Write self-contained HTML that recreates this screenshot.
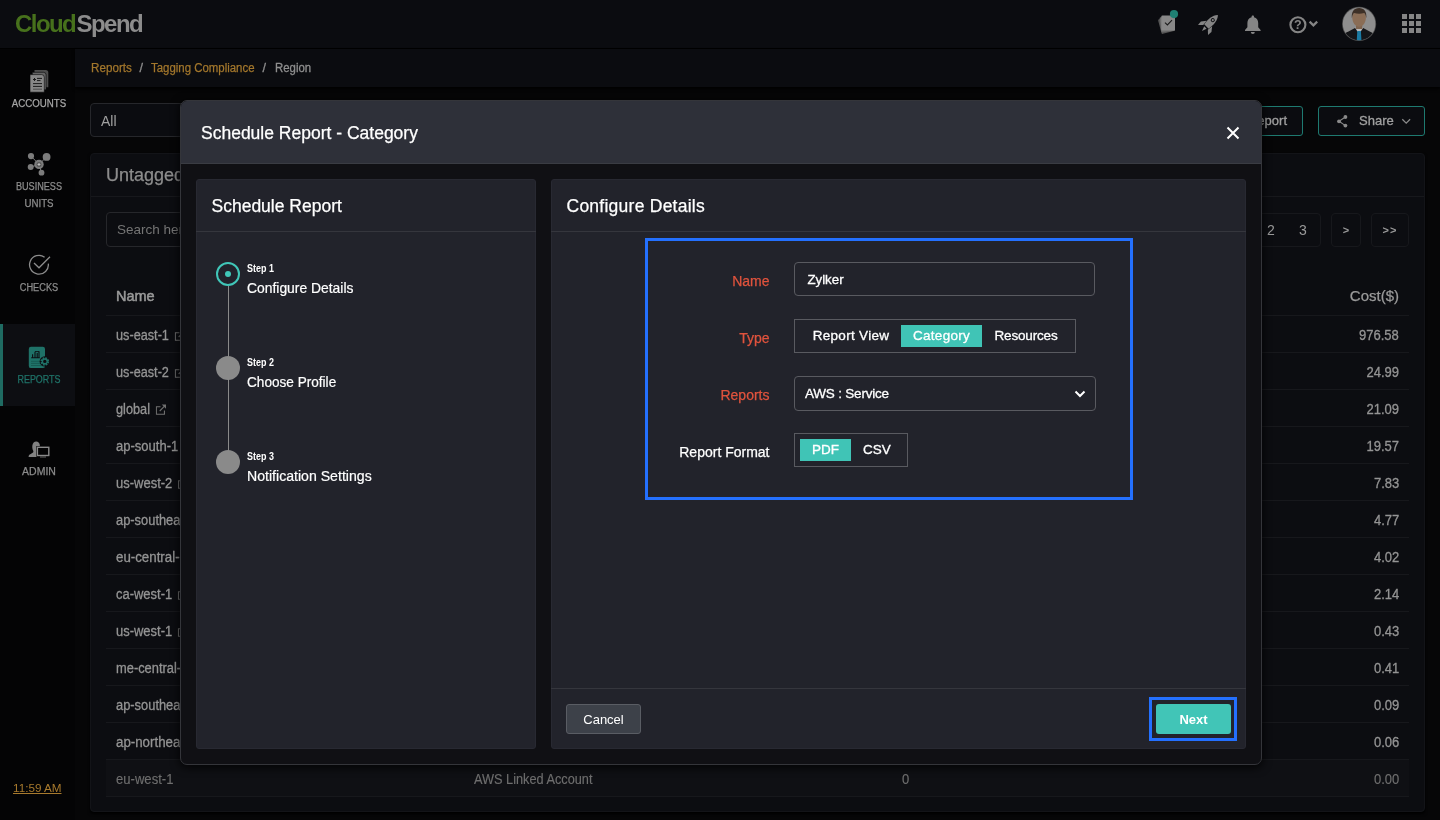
<!DOCTYPE html>
<html lang="en">
<head>
<meta charset="utf-8">
<title>CloudSpend - Schedule Report</title>
<style>
*{box-sizing:border-box;margin:0;padding:0}
html,body{width:1440px;height:820px;overflow:hidden;background:#060607;font-family:"Liberation Sans",sans-serif;color:#ccc}
#wrap{position:absolute;left:0;top:0;width:1440px;height:820px;will-change:transform}
.abs{position:absolute}
#top{position:absolute;left:0;top:0;width:1440px;height:49px;background:#0b0c10;border-bottom:1px solid #000}
#logo{position:absolute;left:15px;top:9px;font-size:24px;font-weight:bold;letter-spacing:-1.55px;line-height:30px}
#logo .g{color:#47711c}
#logo .s{color:#8c8c8c;margin-left:1.300px}
#side{position:absolute;left:0;top:49px;width:75px;height:771px;background:#040405}
.nav{position:absolute;left:3px;width:72px;text-align:center;font-size:10px;color:#8c8c8c;line-height:17px;white-space:nowrap;transform-origin:50% 50%;-webkit-text-stroke:.25px currentColor}
#crumb{position:absolute;left:75px;top:49px;width:1365px;height:38px;background:#0b0c10;box-shadow:0 2px 3px #000}
#crumb span{position:absolute;top:0;font-size:12.5px;line-height:39.500px;transform-origin:0 50%;color:#8f8f8f;white-space:nowrap;-webkit-text-stroke:.3px #8f8f8f}
#crumb span.a{color:#a3772c;-webkit-text-stroke:.25px #a3772c}
#sel{position:absolute;left:90px;top:103px;width:200px;height:34px;border:1px solid #26272b;border-radius:4px;background:#0b0c10;font-size:14px;line-height:34px;padding-left:10px;color:#a0a0a0}
.tbtn{position:absolute;top:106px;height:30px;border:1px solid #1e7a70;border-radius:3px;background:#0b0c10;font-size:13px;line-height:28px;color:#a0a0a0;-webkit-text-stroke:.3px #a0a0a0}
#card{position:absolute;left:90px;top:153px;width:1335px;height:659px;background:#0c0d11;border:1px solid #131418;border-radius:4px;box-shadow:0 2px 3px #000}
#cardt{position:absolute;left:106px;top:163px;font-size:18px;color:#8c8c8c;-webkit-text-stroke:.25px #8c8c8c;line-height:24px;white-space:nowrap}
.hline{position:absolute;height:1px}
#srch{position:absolute;left:106px;top:212px;width:200px;height:35px;border:1px solid #26272b;border-radius:4px;font-size:13.5px;line-height:34px;padding-left:10px;color:#747474}
.pg{position:absolute;top:213px;height:34px;border:1px solid #17181c;border-radius:4px}
.pgt{position:absolute;top:213px;height:34px;font-size:14px;line-height:34px;color:#9a9a9a;text-align:center}
.th{position:absolute;top:286px;font-size:14.5px;color:#9a9a9a;line-height:20px}
.row{position:absolute;left:106px;width:1303px;height:37px;border-top:1px solid #17181c;font-size:14px;line-height:38.400px;color:#949494}
.row span.n{position:absolute;left:10px;white-space:nowrap;transform-origin:0 50%;transform:scaleX(.92);-webkit-text-stroke:.3px currentColor}
.row span.c{position:absolute;right:10px;transform-origin:100% 50%;transform:scaleX(.93);-webkit-text-stroke:.3px currentColor}
.row .ext{margin-left:6.500px;vertical-align:-1px;transform:scaleX(1.080)}
.row.last{background:#0f1014;color:#6e6e6e;border-bottom:1px solid #17181c;height:38px}
.row.last span{-webkit-text-stroke:.15px currentColor!important}
#modal{position:absolute;left:180px;top:100px;width:1082px;height:665px;background:#101014;border:1px solid #34353a;border-radius:7px;box-shadow:0 2px 8px 1px rgba(0,0,0,.75)}
#mh{position:absolute;left:181px;top:101px;width:1080px;height:63px;background:#2e3039;border-bottom:1px solid #3a3c43;border-radius:6px 6px 0 0}
.t18{position:absolute;font-size:17.5px;color:#fff;-webkit-text-stroke:.25px #fff;line-height:24px;white-space:nowrap}
.panel{position:absolute;top:179px;height:570px;background:#22232b;border:1px solid #282932;border-radius:3px}
.st{position:absolute;left:247px;color:#fff;white-space:nowrap}
.st b{display:block;font-size:10px;line-height:12px;transform-origin:0 50%;transform:scaleX(.895)}
.st span{display:block;font-size:14.500px;line-height:20px;margin-top:3.300px;-webkit-text-stroke:.2px #fff;transform-origin:0 50%}
.dot{position:absolute;left:216px;width:24px;height:24px;border-radius:50%;background:#8a8a8a}
.lbl{position:absolute;font-size:14px;color:#e0533d;-webkit-text-stroke:.25px currentColor;line-height:18px;white-space:nowrap;text-align:right;width:200px;left:569.500px}
.fld{position:absolute;left:794px;border:1px solid #595a60;font-size:13.5px;color:#fff;-webkit-text-stroke:.3px #fff;white-space:nowrap}
.tg{position:absolute;top:5px;height:22px;line-height:21px;text-align:center;white-space:nowrap}
.tg.on{background:#40c4b6}
.btn{position:absolute;top:704px;height:30px;border-radius:3px;font-size:13px;line-height:28px;text-align:center;color:#fff}
</style>
</head>
<body>
<div id="wrap">
<div id="top">
  <div id="logo"><span class="g">Cloud</span><span class="s">Spend</span></div>
<svg class="abs" style="left:1140px;top:0" width="300" height="48" viewBox="1140 0 300 48">
    <!-- checklist stack -->
    <g>
      <rect x="1161.300" y="15.600" width="13.700" height="15" rx="1.200" fill="#555" transform="rotate(-15 1175 30.600)"/>
      <rect x="1161.300" y="15.600" width="13.700" height="15" rx="1.200" fill="#6c6c6c" transform="rotate(-7.500 1175 30.600)"/>
      <rect x="1161.300" y="15.600" width="13.700" height="15" rx="1.200" fill="#888"/>
      <path d="M1165 22.600l2.400 2.300 4.600-4.700" fill="none" stroke="#1c1c1c" stroke-width="1.100"/>
      <circle cx="1174" cy="14.100" r="4.100" fill="#1f8073"/>
    </g>
    <!-- rocket -->
    <g fill="#858585" transform="translate(1209.800 23.100) rotate(45) scale(1.200)">
      <path d="M0 -9.500C3.200 -6.500 3.400 -1 2.600 4L-2.600 4C-3.400 -1 -3.200 -6.500 0 -9.500Z"/>
      <path d="M-3.300 .500L-6.200 4.300L-5.900 8L-2.700 5Z"/>
      <path d="M3.300 .500L6.200 4.300L5.900 8L2.700 5Z"/>
      <path d="M-1.400 5.200L1.400 5.200L0 9.200Z"/>
      <circle cx="0" cy="-3.500" r="1.700" fill="#0b0c10"/>
      <circle cx="0" cy="-3.500" r=".9"/>
    </g>
    <!-- bell -->
    <g fill="#858585">
      <path d="M1252.800 15.400c.8 0 1.200.5 1.200 1.200v.6c2.700.7 4.200 2.900 4.200 5.700v4.300l2.400 2.700v1.100h-15.600v-1.100l2.400-2.700v-4.300c0-2.800 1.500-5 4.200-5.700v-.6c0-.7.400-1.200 1.200-1.200z"/>
      <path d="M1250.800 32h4a2 2 0 0 1-4 0z"/>
    </g>
    <!-- help -->
    <g>
      <circle cx="1297.900" cy="24.700" r="7.500" fill="none" stroke="#858585" stroke-width="2.100"/>
      <text x="1297.900" y="29.200" text-anchor="middle" font-family="Liberation Sans, sans-serif" font-size="12.500" font-weight="bold" fill="#858585">?</text>
      <path d="M1309.600 21.600l3.800 3.800 3.800-3.800" fill="none" stroke="#858585" stroke-width="2.200"/>
    </g>
    <!-- avatar -->
    <g>
      <clipPath id="avc"><circle cx="1359.100" cy="23.900" r="16.300"/></clipPath>
      <circle cx="1359.100" cy="23.900" r="17.100" fill="#4a4a4a"/>
      <circle cx="1359.100" cy="23.900" r="16.300" fill="#8e8e8e"/>
      <g clip-path="url(#avc)">
        <path d="M1341 42c0-6 2.500-8.500 7.500-10.500l6.500-3.600h8.200l6.500 3.600c5 2 7.500 4.500 7.500 10.500z" fill="#141518"/>
        <path d="M1355 27.700l4.100 6.300 4.100-6.300z" fill="#b9b9b9"/>
        <path d="M1357.300 31h3.600l.6 10h-4.800z" fill="#1a7aa3"/>
        <rect x="1356" y="24" width="6.200" height="5" fill="#7e6450"/>
        <path d="M1352.300 17.500c0-4 2.700-6.500 6.800-6.500s6.800 2.500 6.800 6.500c0 5-2.800 9.200-6.800 9.200s-6.800-4.200-6.800-9.200z" fill="#8a6d56"/>
        <path d="M1351.900 18.300c-.8-6.300 2-10.300 7.200-10.300s8 4 7.200 10.300c-.4-2.800-1-4.400-2.200-5.400-3.200 1-6.800 1-10 0-1.200 1-1.800 2.600-2.200 5.400z" fill="#3d3027"/>
      </g>
    </g>
    <!-- grid -->
    <g fill="#858585">
      <rect x="1402" y="14" width="5" height="5"/><rect x="1409" y="14" width="5" height="5"/><rect x="1416" y="14" width="5" height="5"/>
      <rect x="1402" y="21" width="5" height="5"/><rect x="1409" y="21" width="5" height="5"/><rect x="1416" y="21" width="5" height="5"/>
      <rect x="1402" y="28" width="5" height="5"/><rect x="1409" y="28" width="5" height="5"/><rect x="1416" y="28" width="5" height="5"/>
    </g>
  </svg>
</div>
<div id="side">
  <div class="abs" style="left:0;top:275px;width:75px;height:82px;background:#0d0e12;border-left:3px solid #1f6b62"></div>
<svg class="abs" style="left:0;top:0" width="75" height="771" viewBox="0 49 75 771">
    <!-- accounts -->
    <g>
      <path d="M34.5 70h11.2a2.6 2.6 0 0 1 2.6 2.6v14.6h-13.8z" fill="#4e4e4e"/>
      <path d="M32.3 72.3h11.2a2.6 2.6 0 0 1 2.6 2.6v14.8h-13.8z" fill="#666" stroke="#040405" stroke-width=".6"/>
      <path d="M30 74.6h11.6a2.7 2.7 0 0 1 2.7 2.7v14.9h-14.3z" fill="#878787" stroke="#040405" stroke-width=".6"/>
      <g stroke="#1a1a1a" stroke-width="1" fill="none">
        <path d="M33 79.5h3M34.5 78v3M37 78.4h5M37 80.6h3.5M33 83.6h9M33 86.4h9"/>
      </g>
      <path d="M33 89.2h9" stroke="#555" stroke-width="1.2"/>
    </g>
    <!-- business units -->
    <g fill="#7c7c7c" stroke="#7c7c7c">
      <path d="M31 156.1L39 164.4M46.6 156.9L39 164.4M30.7 167.1L39 164.4M41.5 172.7L39 164.4" stroke-width="1" fill="none"/>
      <circle cx="31" cy="156.1" r="3.1" stroke="none"/>
      <circle cx="46.6" cy="156.9" r="3.9" stroke="none"/>
      <circle cx="30.7" cy="167.1" r="3" stroke="none"/>
      <circle cx="41.5" cy="172.7" r="2.9" stroke="none"/>
      <circle cx="39" cy="164.4" r="4.7" stroke="none"/>
      <circle cx="39" cy="164.4" r="2.5" fill="#565656" stroke="none"/>
      <path d="M39 162.900v3M37.500 164.400h3" stroke="#c8c8c8" stroke-width=".9" fill="none"/>
    </g>
    <!-- checks -->
    <g fill="none" stroke="#8c8c8c" stroke-width="1.3">
      <path d="M44.6 257.2A9.4 9.4 0 1 0 48.3 263.6"/>
      <path d="M34 263L39 267.8L50 256.8"/>
    </g>
    <!-- reports -->
    <g>
      <rect x="28.8" y="346.7" width="16.2" height="21.4" rx="2.2" fill="#1f7268"/>
      <path d="M31.2 357.8h8.6M32.6 357.4v-3.2M35 357.4v-5.6M37.2 357.4v-4.4M39 357.4v-6.2" stroke="#0d0e12" stroke-width="1.1" fill="none"/>
      <path d="M35 351.6h4" stroke="#0d0e12" stroke-width=".9"/>
      <path d="M31 361.3h9M31 363.4h9M31 365.5h11" stroke="#175a52" stroke-width="1" fill="none"/>
      <circle cx="44.8" cy="361.4" r="5.2" fill="#0d0e12"/>
      <circle cx="44.8" cy="361.4" r="3.3" fill="none" stroke="#1f7268" stroke-width="2" stroke-dasharray="1.6 1"/>
      <circle cx="44.8" cy="361.4" r="2.4" fill="none" stroke="#1f7268" stroke-width="1.4"/>
    </g>
    <!-- admin -->
    <g>
      <path d="M28.6 457c0-1.8.6-2.5 2.2-3.1 1.6-.6 2.6-1.2 2.6-2.3 0-.9-.7-1.400-.9-2.800-.2-.9-.3-2.300-.1-3.500.4-2.400 1.800-3.900 3.800-3.900s3.300 1.400 3.600 3.400l.1 2.200h-3v10z" fill="#828282"/>
      <rect x="36.200" y="446.100" width="13.800" height="10.600" fill="#040405"/><rect x="37.400" y="447.300" width="11.400" height="8.200" fill="#040405" stroke="#8a8a8a" stroke-width="1.400"/>
      <path d="M40 457h6" stroke="#666" stroke-width="1"/>
    </g>
  </svg>
  <div class="nav" style="top:45.800px;color:#a6a6a6;transform:scaleX(.97)">ACCOUNTS</div>
  <div class="nav" style="top:129px;transform:scaleX(.911)">BUSINESS</div>
  <div class="nav" style="top:146px;transform:scaleX(.97)">UNITS</div>
  <div class="nav" style="top:230px;transform:scaleX(.923)">CHECKS</div>
  <div class="nav" style="top:322px;transform:scaleX(.894);color:#1f7268">REPORTS</div>
  <div class="nav" style="top:413.800px;transform:scaleX(1.050)">ADMIN</div>
  <div class="abs" style="left:13px;top:732px;font-size:11.700px;color:#a87a2d;text-decoration:underline;line-height:14px;white-space:nowrap">11:59 AM</div>
</div>
<div id="crumb">
  <span class="a" style="left:15.500px;transform:scaleX(.934)">Reports</span><span style="left:64.500px">/</span>
  <span class="a" style="left:76.300px;transform:scaleX(.914)">Tagging Compliance</span><span style="left:187.500px">/</span>
  <span style="left:199.600px;transform:scaleX(.912)">Region</span>
</div>
<div id="sel">All</div>
<div class="tbtn" style="left:1170px;width:133px;text-align:right;padding-right:15px">Schedule Report</div>
<div class="tbtn" style="left:1318px;width:107px;padding-left:40px">Share</div>
<svg class="abs" style="left:1334px;top:112px" width="80" height="18" viewBox="1334 112 80 18">
  <g fill="#8a8a8a"><circle cx="1345.400" cy="117" r="1.900"/><circle cx="1339" cy="121.300" r="1.900"/><circle cx="1345.400" cy="125.600" r="1.900"/></g>
  <path d="M1345.400 117L1339 121.300L1345.400 125.600" fill="none" stroke="#8a8a8a" stroke-width="1.100"/>
  <path d="M1402.300 119.200l3.900 3.900 3.900-3.900" fill="none" stroke="#8a8a8a" stroke-width="1.300"/>
</svg>
<div id="card"></div>
<div id="cardt">Untagged Resources</div>
<div class="hline" style="left:91px;top:196px;width:1333px;background:#17181c"></div>
<div id="srch">Search here</div>
<div class="pg" style="left:1200px;width:121px"></div>
<div class="pgt" style="left:1256px;width:30px">2</div>
<div class="pgt" style="left:1288px;width:30px">3</div>
<div class="pg" style="left:1331px;width:30px"></div>
<div class="pgt" style="left:1331px;width:30px;font-size:11px;font-weight:bold">&gt;</div>
<div class="pg" style="left:1371px;width:38px"></div>
<div class="pgt" style="left:1371px;width:38px;font-size:11px;font-weight:bold;letter-spacing:1px">&gt;&gt;</div>
<div class="th" style="left:116px;-webkit-text-stroke:.5px #9a9a9a">Name</div>
<div class="th" style="right:41px;font-size:15px;-webkit-text-stroke:.25px #9a9a9a">Cost($)</div>
<div class="row" style="top:315px"><span class="n" style="transform:scaleX(0.907)">us-east-1<svg class="ext" width="11" height="11" viewBox="0 0 11 11"><path d="M5 2.800H.800V10.300H9V6.500M4.200 7L9.600 1.600" fill="none" stroke="#707070" stroke-width="1.100"/><path d="M6.300 .500H10.600V4.800Z" fill="#707070"/></svg></span><span class="c">976.58</span></div>
<div class="row" style="top:352px"><span class="n" style="transform:scaleX(0.907)">us-east-2<svg class="ext" width="11" height="11" viewBox="0 0 11 11"><path d="M5 2.800H.800V10.300H9V6.500M4.200 7L9.600 1.600" fill="none" stroke="#707070" stroke-width="1.100"/><path d="M6.300 .500H10.600V4.800Z" fill="#707070"/></svg></span><span class="c">24.99</span></div>
<div class="row" style="top:389px"><span class="n" style="transform:scaleX(0.909)">global<svg class="ext" width="11" height="11" viewBox="0 0 11 11"><path d="M5 2.800H.800V10.300H9V6.500M4.200 7L9.600 1.600" fill="none" stroke="#707070" stroke-width="1.100"/><path d="M6.300 .500H10.600V4.800Z" fill="#707070"/></svg></span><span class="c">21.09</span></div>
<div class="row" style="top:426px"><span class="n" style="transform:scaleX(0.93)">ap-south-1<svg class="ext" width="11" height="11" viewBox="0 0 11 11"><path d="M5 2.800H.800V10.300H9V6.500M4.200 7L9.600 1.600" fill="none" stroke="#707070" stroke-width="1.100"/><path d="M6.300 .500H10.600V4.800Z" fill="#707070"/></svg></span><span class="c">19.57</span></div>
<div class="row" style="top:463px"><span class="n" style="transform:scaleX(0.928)">us-west-2<svg class="ext" width="11" height="11" viewBox="0 0 11 11"><path d="M5 2.800H.800V10.300H9V6.500M4.200 7L9.600 1.600" fill="none" stroke="#707070" stroke-width="1.100"/><path d="M6.300 .500H10.600V4.800Z" fill="#707070"/></svg></span><span class="c">7.83</span></div>
<div class="row" style="top:500px"><span class="n" style="transform:scaleX(0.92)">ap-southeast-1<svg class="ext" width="11" height="11" viewBox="0 0 11 11"><path d="M5 2.800H.800V10.300H9V6.500M4.200 7L9.600 1.600" fill="none" stroke="#707070" stroke-width="1.100"/><path d="M6.300 .500H10.600V4.800Z" fill="#707070"/></svg></span><span class="c">4.77</span></div>
<div class="row" style="top:537px"><span class="n" style="transform:scaleX(0.95)">eu-central-1<svg class="ext" width="11" height="11" viewBox="0 0 11 11"><path d="M5 2.800H.800V10.300H9V6.500M4.200 7L9.600 1.600" fill="none" stroke="#707070" stroke-width="1.100"/><path d="M6.300 .500H10.600V4.800Z" fill="#707070"/></svg></span><span class="c">4.02</span></div>
<div class="row" style="top:574px"><span class="n" style="transform:scaleX(0.926)">ca-west-1<svg class="ext" width="11" height="11" viewBox="0 0 11 11"><path d="M5 2.800H.800V10.300H9V6.500M4.200 7L9.600 1.600" fill="none" stroke="#707070" stroke-width="1.100"/><path d="M6.300 .500H10.600V4.800Z" fill="#707070"/></svg></span><span class="c">2.14</span></div>
<div class="row" style="top:611px"><span class="n" style="transform:scaleX(0.926)">us-west-1<svg class="ext" width="11" height="11" viewBox="0 0 11 11"><path d="M5 2.800H.800V10.300H9V6.500M4.200 7L9.600 1.600" fill="none" stroke="#707070" stroke-width="1.100"/><path d="M6.300 .500H10.600V4.800Z" fill="#707070"/></svg></span><span class="c">0.43</span></div>
<div class="row" style="top:648px"><span class="n" style="transform:scaleX(0.92)">me-central-1<svg class="ext" width="11" height="11" viewBox="0 0 11 11"><path d="M5 2.800H.800V10.300H9V6.500M4.200 7L9.600 1.600" fill="none" stroke="#707070" stroke-width="1.100"/><path d="M6.300 .500H10.600V4.800Z" fill="#707070"/></svg></span><span class="c">0.41</span></div>
<div class="row" style="top:685px"><span class="n" style="transform:scaleX(0.92)">ap-southeast-2<svg class="ext" width="11" height="11" viewBox="0 0 11 11"><path d="M5 2.800H.800V10.300H9V6.500M4.200 7L9.600 1.600" fill="none" stroke="#707070" stroke-width="1.100"/><path d="M6.300 .500H10.600V4.800Z" fill="#707070"/></svg></span><span class="c">0.09</span></div>
<div class="row" style="top:722px"><span class="n" style="transform:scaleX(0.95)">ap-northeast-1<svg class="ext" width="11" height="11" viewBox="0 0 11 11"><path d="M5 2.800H.800V10.300H9V6.500M4.200 7L9.600 1.600" fill="none" stroke="#707070" stroke-width="1.100"/><path d="M6.300 .500H10.600V4.800Z" fill="#707070"/></svg></span><span class="c">0.06</span></div>
<div class="row last" style="top:759px"><span class="n" style="transform:scaleX(.935)">eu-west-1</span><span class="abs" style="left:368px;white-space:nowrap;transform-origin:0 50%;transform:scaleX(.91)">AWS Linked Account</span><span class="abs" style="left:796px;transform-origin:0 50%;transform:scaleX(.93)">0</span><span class="c">0.00</span></div>

<div id="modal"></div>
<div id="mh"></div>
<div class="t18" style="left:201px;top:121px">Schedule Report - Category</div>
<svg class="abs" style="left:1226px;top:126px" width="14" height="14" viewBox="0 0 14 14"><path d="M1.500 1.500L12.500 12.500M12.500 1.500L1.500 12.500" stroke="#fff" stroke-width="2" fill="none"/></svg>

<div class="panel" style="left:196px;width:340px"></div>
<div class="t18" style="left:211.500px;top:194px">Schedule Report</div>
<div class="hline" style="left:196px;top:231px;width:340px;background:#35363d"></div>
<div class="abs" style="left:228px;top:286px;width:1px;height:166px;background:#8a8a8a"></div>
<div class="dot" style="top:262px;background:#21222b;border:2px solid #40c6b8"></div>
<div class="abs" style="left:225px;top:271px;width:6px;height:6px;border-radius:50%;background:#40c6b8"></div>
<div class="dot" style="top:356px"></div>
<div class="dot" style="top:450px"></div>
<div class="st" style="top:263px"><b>Step 1</b><span style="transform:scaleX(.957)">Configure Details</span></div>
<div class="st" style="top:357px"><b>Step 2</b><span style="transform:scaleX(.938)">Choose Profile</span></div>
<div class="st" style="top:451px"><b>Step 3</b><span style="transform:scaleX(.973)">Notification Settings</span></div>

<div class="panel" style="left:551px;width:695px"></div>
<div class="t18" style="left:566.500px;top:194px;letter-spacing:.25px">Configure Details</div>
<div class="hline" style="left:551px;top:231px;width:695px;background:#35363d"></div>
<div class="abs" style="left:645px;top:238px;width:488px;height:262px;border:3px solid #2470fe"></div>
<div class="lbl" style="top:272px">Name</div>
<div class="fld" style="top:262px;width:301px;height:34px;border-radius:4px;line-height:33px;padding-left:12.400px;font-size:13.300px">Zylker</div>
<div class="lbl" style="top:329px">Type</div>
<div class="fld" style="top:319px;width:282px;height:34px">
  <div class="tg" style="left:12px;width:88px;letter-spacing:.3px">Report View</div>
  <div class="tg on" style="left:106px;width:81px;letter-spacing:.25px">Category</div>
  <div class="tg" style="left:193px;width:76px;letter-spacing:-.17px">Resources</div>
</div>
<div class="lbl" style="top:386px">Reports</div>
<div class="fld" style="top:376px;width:302px;height:35px;border-radius:4px;line-height:33px;padding-left:10px;letter-spacing:-.2px">AWS : Service</div>
<svg class="abs" style="left:1073px;top:388px" width="14" height="12" viewBox="0 0 14 12"><path d="M2.500 3.500L7 8L11.500 3.500" stroke="#fff" stroke-width="2" fill="none"/></svg>
<div class="lbl" style="top:443px;color:#fff">Report Format</div>
<div class="fld" style="top:433px;width:114px;height:34px">
  <div class="tg on" style="left:5px;width:51px">PDF</div>
  <div class="tg" style="left:62px;width:40px">CSV</div>
</div>
<div class="hline" style="left:551px;top:688px;width:695px;background:#35363d"></div>
<div class="btn" style="left:566px;width:75px;background:#3d4149;border:1px solid #5a5d64;line-height:29px">Cancel</div>
<div class="abs" style="left:1149px;top:697px;width:88px;height:44px;border:3px solid #2470fe"></div>
<div class="btn" style="left:1156px;width:75px;background:#41c5b7;font-weight:bold;line-height:31px">Next</div>
</div>
</body>
</html>
